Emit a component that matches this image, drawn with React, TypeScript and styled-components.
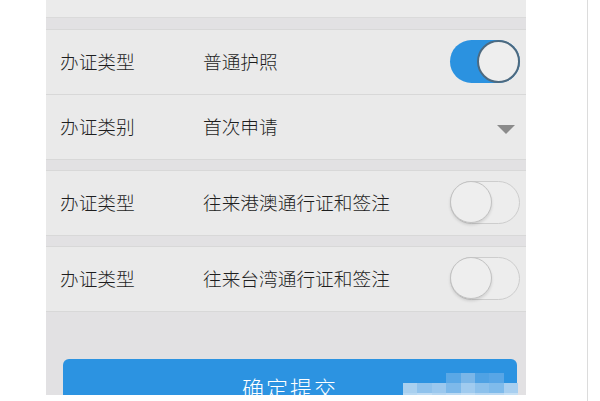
import React from "react";
import styled, { createGlobalStyle } from "styled-components";

const Global = createGlobalStyle`
  html, body { margin: 0; padding: 0; background: #fff; }
  body { font-family: "Noto Sans CJK SC", "Noto Sans", sans-serif; }
`;

const Page = styled.div`
  width: 600px;
  height: 401px;
  display: flex;
  background: #fff;
  overflow: hidden;
`;

const LeftMargin = styled.div`
  width: 46px;
  flex: none;
`;

const Screen = styled.div`
  position: relative;
  width: 480px;
  height: 395px;
  flex: none;
  display: flex;
  flex-direction: column;
  background: #e2e1e3;
  overflow: hidden;
`;

const RightMargin = styled.div`
  width: 61px;
  flex: none;
  border-right: 1px solid #dcdcdc;
`;

const TopStub = styled.div`
  height: 17px;
  flex: none;
  background: #ebebeb;
  border-bottom: 1px solid #dadada;
`;

const GapBand = styled.div<{ $h: number }>`
  height: ${(p) => p.$h}px;
  flex: none;
  background: #e2e1e3;
  border-bottom: 1px solid #d8d8d8;
`;

const Row = styled.div`
  height: 64px;
  flex: none;
  display: flex;
  align-items: center;
  background: #eaeaea;
  border-bottom: 1px solid #d8d8d8;
  padding: 0 6px 0 14px;
  color: #1e1e1e;
  font-size: 18.7px;
  font-weight: 300;
`;

const Label = styled.span`
  width: 143px;
  flex: none;
  margin-bottom: 3px;
`;

const Value = styled.span`
  flex: 1;
  margin-bottom: 3px;
`;

const Toggle = styled.div<{ $on: boolean }>`
  position: relative;
  width: 70px;
  height: 43px;
  border-radius: 22px;
  box-sizing: border-box;
  background: ${(p) => (p.$on ? "#2b92e0" : "#ededed")};
  border: ${(p) => (p.$on ? "none" : "1.5px solid #cdcdcd")};
  margin-top: -2px;
`;

const Knob = styled.div<{ $on: boolean }>`
  position: absolute;
  top: ${(p) => (p.$on ? "0" : "-1px")};
  ${(p) => (p.$on ? "right: 0;" : "left: -1px;")}
  width: ${(p) => (p.$on ? "43px" : "42px")};
  height: ${(p) => (p.$on ? "43px" : "42px")};
  border-radius: 50%;
  box-sizing: border-box;
  background: #eeeeee;
  border: ${(p) => (p.$on ? "2px solid #4d6a80" : "1.5px solid #c2c2c2")};
  box-shadow: ${(p) => (p.$on ? "none" : "0 2px 3px rgba(0,0,0,0.12)")};
`;

const Caret = styled.div`
  width: 0;
  height: 0;
  border-left: 9px solid transparent;
  border-right: 9px solid transparent;
  border-top: 9px solid #8b8b8b;
  margin-right: 5px;
  margin-top: 4px;
`;

const BottomArea = styled.div`
  flex: 1;
  padding: 47px 9px 0 17px;
  background: #e2e1e3;
`;

const SubmitButton = styled.div`
  height: 60px;
  border-radius: 6px;
  background: #2c93e1;
  color: #fff;
  font-size: 22px;
  font-weight: 300;
  letter-spacing: 2px;
  display: flex;
  justify-content: center;
  padding-top: 12px;
  box-sizing: border-box;
`;

const Mosaic = styled.div`
  position: absolute;
  left: 357px;
  top: 373px;
  width: 115px;
  height: 30px;
  display: grid;
  grid-template-columns: repeat(8, 1fr);
  grid-template-rows: repeat(3, 1fr);
  border-bottom-left-radius: 8px;
  overflow: hidden;
`;

const Cell = styled.div<{ $c: string }>`
  background: ${(p) => p.$c};
`;

const mosaicColors = [
  "transparent", "transparent", "transparent", "#5aa8e6", "#7ab6e8", "#4fa2e4", "#58a6e6", "transparent",
  "#a9d0ef", "#8fc2ec", "#9bc8ee", "#7db9ea", "#a0cbef", "#8cc1ec", "#7fbbeb", "#a8cff0",
  "#b7d8f2", "#c0dcf3", "#b5d6f1", "#bddaf2", "#c3def4", "#b8d8f2", "#bcd9f2", "#c6e0f4",
];

type ToggleRow = { label: string; value: string; on: boolean };

const App: React.FC = () => {
  const rows: ToggleRow[] = [
    { label: "办证类型", value: "往来港澳通行证和签注", on: false },
    { label: "办证类型", value: "往来台湾通行证和签注", on: false },
  ];
  return (
    <>
      <Global />
      <Page>
        <LeftMargin />
        <Screen>
          <TopStub />
          <GapBand $h={11} />
          <Row>
            <Label>办证类型</Label>
            <Value>普通护照</Value>
            <Toggle $on>
              <Knob $on />
            </Toggle>
          </Row>
          <Row>
            <Label>办证类别</Label>
            <Value>首次申请</Value>
            <Caret />
          </Row>
          {rows.map((r, i) => (
            <React.Fragment key={i}>
              <GapBand $h={10} />
              <Row>
                <Label>{r.label}</Label>
                <Value>{r.value}</Value>
                <Toggle $on={r.on}>
                  <Knob $on={r.on} />
                </Toggle>
              </Row>
            </React.Fragment>
          ))}
          <BottomArea>
            <SubmitButton>确定提交</SubmitButton>
          </BottomArea>
          <Mosaic>
            {mosaicColors.map((c, i) => (
              <Cell key={i} $c={c} />
            ))}
          </Mosaic>
        </Screen>
        <RightMargin />
      </Page>
    </>
  );
};

export default App;
